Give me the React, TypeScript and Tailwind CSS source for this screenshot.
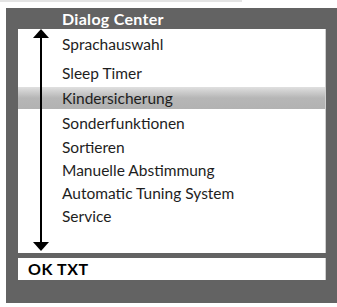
import React from "react";

const items: { label: string; h: string; active?: boolean }[] = [
  { label: "Sprachauswahl", h: "h-[31px]" },
  { label: "Sleep Timer", h: "h-[27px]" },
  { label: "Kindersicherung", h: "h-[22px] mb-[3px] pt-[2px]", active: true },
  { label: "Sonderfunktionen", h: "h-[24px]" },
  { label: "Sortieren", h: "h-[23px]" },
  { label: "Manuelle Abstimmung", h: "h-[23px]" },
  { label: "Automatic Tuning System", h: "h-[23px]" },
  { label: "Service", h: "h-[23px]" },
];

export default function App() {
  return (
    <div
      className="w-[337px] h-[307px] bg-white flex flex-col overflow-hidden"
      style={{ fontFamily: "Lato, 'Open Sans', sans-serif" }}
    >
      <div className="h-[2px] w-[242px] bg-[#e4e4e4]" />
      <div className="ml-[6px] mt-[6px] w-[331px] h-[295px] bg-[#636363] flex flex-col pl-[12px] pr-[11px]">
        <div className="h-[21px] flex items-center pl-[44px] pt-[1px] text-white font-bold text-[16px] tracking-[0.3px] leading-none">
          Dialog Center
        </div>
        <div className="relative h-[224px] bg-white border-r border-[#cfcfcf] flex flex-col">
          {items.map((it) => (
            <div
              key={it.label}
              className={`${it.h} flex items-center pl-[44px] text-[15.5px] leading-none text-[#1e1e1e] ${
                it.active ? "bg-gradient-to-b from-[#e0e0e0] via-[#b6b6b6] to-[#b2b2b2]" : ""
              }`}
            >
              {it.label}
            </div>
          ))}
          <svg
            className="absolute left-[14px] top-0"
            width="18"
            height="224"
            viewBox="0 0 18 224"
          >
            <polygon points="9,0 1,9 17,9" fill="#000" />
            <rect x="8" y="8" width="2" height="208" fill="#000" />
            <polygon points="9,222 1,213 17,213" fill="#000" />
          </svg>
        </div>
        <div className="mt-[5px] h-[22px] bg-white border-r border-[#cfcfcf] flex items-center pl-[10px] text-[16px] font-bold tracking-[0.6px] text-black leading-none">
          OK TXT
        </div>
      </div>
    </div>
  );
}
